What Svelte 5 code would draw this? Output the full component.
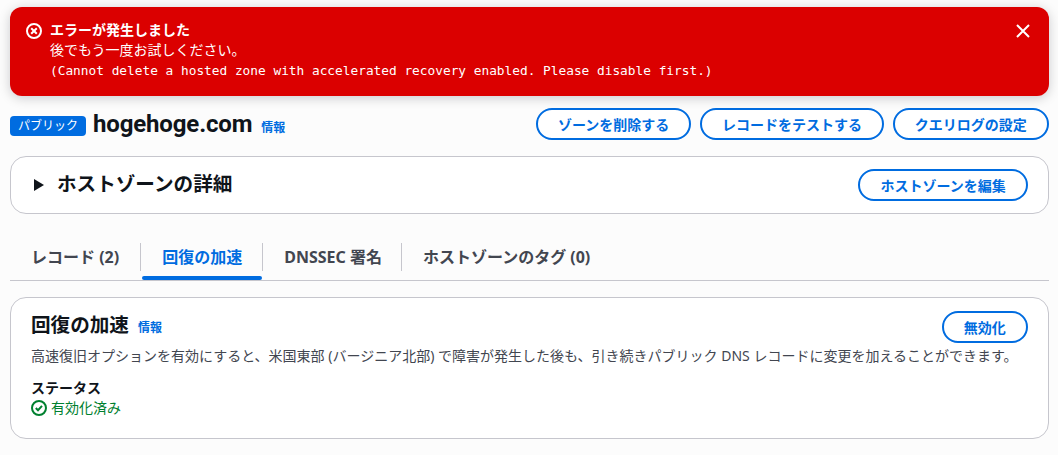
<script>
	const tabs = [
		{ label: 'レコード (2)' },
		{ label: '回復の加速', active: true },
		{ label: 'DNSSEC 署名' },
		{ label: 'ホストゾーンのタグ (0)' }
	];
	const actions = ['ゾーンを削除する', 'レコードをテストする', 'クエリログの設定'];
</script>

<div class="page">
	<div class="flash">
		<svg class="flash-icon" viewBox="0 0 16 16" width="16" height="16" fill="none" stroke="#fff" stroke-width="2">
			<circle cx="8" cy="8" r="7" />
			<path d="M10.8 5.2l-5.6 5.6M5.2 5.2l5.6 5.6" />
		</svg>
		<div class="flash-body">
			<div class="flash-title">エラーが発生しました</div>
			<div>後でもう一度お試しください。</div>
			<div class="flash-code">(Cannot delete a hosted zone with accelerated recovery enabled. Please disable first.)</div>
		</div>
		<svg class="flash-close" viewBox="0 0 16 16" width="16" height="16" fill="none" stroke="#fff" stroke-width="2">
			<path d="M2 2l12 12M14 2L2 14" />
		</svg>
	</div>

	<header class="head">
		<div class="head-title">
			<span class="badge">パブリック</span>
			<h1>hogehoge.com</h1>
			<span class="info">情報</span>
		</div>
		<div class="actions">
			{#each actions as action}
				<button>{action}</button>
			{/each}
		</div>
	</header>

	<section class="card details">
		<div class="details-title">
			<svg viewBox="0 0 12 14" width="12" height="14"><path d="M1 1l10 6-10 6z" fill="#0f141a" /></svg>
			<h2>ホストゾーンの詳細</h2>
		</div>
		<button>ホストゾーンを編集</button>
	</section>

	<nav class="tabs">
		{#each tabs as tab, i}
			<div class="tab" class:active={tab.active} class:divided={i < tabs.length - 1}>
				<span>{tab.label}</span>
			</div>
		{/each}
	</nav>

	<section class="card recovery">
		<div class="recovery-head">
			<div class="recovery-title">
				<h2>回復の加速</h2>
				<span class="info">情報</span>
			</div>
			<button>無効化</button>
		</div>
		<p>高速復旧オプションを有効にすると、米国東部 (バージニア北部) で障害が発生した後も、引き続きパブリック DNS レコードに変更を加えることができます。</p>
		<div class="status-label">ステータス</div>
		<div class="status">
			<svg viewBox="0 0 16 16" width="16" height="16" fill="none" stroke="#00802f" stroke-width="2">
				<circle cx="8" cy="8" r="7" />
				<path d="M4.8 8l2.2 2.2 4-4.4" />
			</svg>
			<span>有効化済み</span>
		</div>
	</section>
</div>

<style>
	:global(body) {
		background: #fcfcfc;
		color: #0f141a;
		font-family: "Noto Sans", "Noto Sans CJK JP", sans-serif;
		font-size: 14px;
	}

	.page {
		padding: 7px 9px 0 10px;
		height: 448px;
		overflow: hidden;
	}

	.flash {
		display: flex;
		height: 89px;
		box-sizing: border-box;
		padding: 13px 18px 0 16px;
		background: #db0000;
		color: #fff;
		border-radius: 12px;
		box-shadow: 0 2px 12px rgba(0, 7, 22, 0.2);
		line-height: 20px;
		font-size: 14px;
	}

	.flash-icon {
		margin: 3px 8px 0 0;
		flex: none;
	}

	.flash-body {
		flex: 1;
	}

	.flash-title {
		font-weight: 700;
	}

	.flash-code {
		font-family: "DejaVu Sans Mono", "Noto Sans CJK JP", monospace;
		font-size: 12.8px;
		margin-top: 1px;
	}

	.flash-close {
		margin-top: 3px;
		flex: none;
	}

	.head {
		display: flex;
		justify-content: space-between;
		align-items: center;
		margin-top: 12px;
		height: 32px;
	}

	.head-title {
		display: flex;
		align-items: center;
	}

	.badge {
		background: #006ce0;
		color: #fff;
		font-size: 12px;
		line-height: 20px;
		padding: 0 8px;
		border-radius: 4px;
		margin-top: 4px;
	}

	h1 {
		margin: 1px 9px 1px 7px;
		font-family: Roboto, "Noto Sans", sans-serif;
		font-size: 24px;
		line-height: 30px;
		font-weight: 700;
		letter-spacing: -0.15px;
	}

	.info {
		color: #006ce0;
		font-size: 12px;
		font-weight: 700;
		line-height: 16px;
		margin-top: 8px;
	}

	.actions {
		display: flex;
		gap: 8.5px;
	}

	button {
		height: 32px;
		box-sizing: border-box;
		padding: 0 20.15px;
		background: #fff;
		border: 2px solid #006ce0;
		border-radius: 16px;
		color: #006ce0;
		font: 700 14px "Noto Sans", "Noto Sans CJK JP", sans-serif;
	}

	.card {
		background: #fff;
		border: 1px solid #c6c6cd;
		border-radius: 16px;
		box-sizing: border-box;
	}

	.details {
		display: flex;
		justify-content: space-between;
		align-items: center;
		margin-top: 16px;
		height: 58px;
		padding: 0 20px 0 22px;
	}

	.details-title {
		display: flex;
		align-items: center;
		gap: 12px;
	}

	h2 {
		margin: 0;
		font-size: 19.6px;
		line-height: 26px;
		font-weight: 700;
	}

	.details h2 {
		margin-bottom: 2px;
	}

	.tabs {
		display: flex;
		box-sizing: border-box;
		margin-top: 28px;
		height: 39px;
		border-bottom: 1px solid #c6c6cd;
	}

	.tab {
		position: relative;
		display: flex;
		align-items: center;
		height: 38px;
		padding: 0 21px;
		color: #424650;
		font-weight: 700;
		font-size: 16px;
	}

	.tab:first-child {
		padding-right: 22px;
	}

	.tab:nth-child(3) {
		padding-right: 20px;
	}

	.tab span {
		margin-top: -10px;
	}

	.tab.divided::after {
		content: "";
		position: absolute;
		right: 0;
		top: 1px;
		height: 28px;
		border-right: 1px solid #c6c6cd;
	}

	.tab.active {
		color: #006ce0;
	}

	.tab.active::before {
		content: "";
		position: absolute;
		left: 1px;
		right: 1px;
		bottom: 0;
		height: 4px;
		background: #006ce0;
		border-radius: 2px;
	}

	.recovery {
		margin-top: 16px;
		height: 142px;
		padding: 14px 20px;
	}

	.recovery-head {
		display: flex;
		justify-content: space-between;
		align-items: flex-start;
		height: 34px;
	}

	.recovery-head button {
		margin-top: -1px;
	}

	.recovery-title {
		display: flex;
		align-items: center;
		gap: 9px;
		height: 26px;
	}

	.recovery-title .info {
		margin-top: 6px;
	}

	p {
		margin: 0;
		font-size: 14px;
		line-height: 20px;
		color: #424650;
	}

	.status-label {
		margin-top: 12px;
		font-weight: 700;
		font-size: 14px;
		line-height: 20px;
	}

	.status {
		display: flex;
		align-items: center;
		gap: 4px;
		color: #00802f;
		font-size: 14px;
		line-height: 20px;
	}
</style>
